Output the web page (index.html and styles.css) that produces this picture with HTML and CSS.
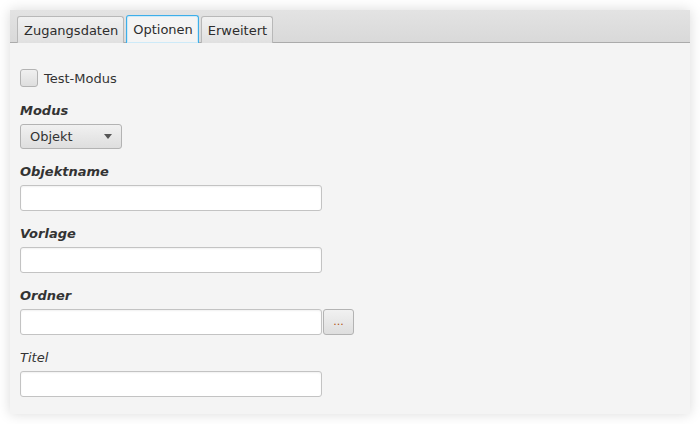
FILE: index.html
```html
<!DOCTYPE html>
<html lang="de">
<head>
    <meta charset="UTF-8">
    <title>Optionen</title>
    <link rel="stylesheet" href="styles.css">
</head>
<body>
    <div class="pane">
        <div class="tab-header">
            <div class="tab">Zugangsdaten</div>
            <div class="tab selected">Optionen</div>
            <div class="tab">Erweitert</div>
        </div>

        <div class="content">
            <label class="check-row">
                <span class="check-box"></span>
                <span>Test-Modus</span>
            </label>

            <div class="field">
                <div class="field-label required">Modus</div>
                <div class="combo">
                    <span>Objekt</span>
                    <span class="arrow"></span>
                </div>
            </div>

            <div class="field">
                <div class="field-label required">Objektname</div>
                <div class="text-input"></div>
            </div>

            <div class="field">
                <div class="field-label required">Vorlage</div>
                <div class="text-input"></div>
            </div>

            <div class="field">
                <div class="field-label required">Ordner</div>
                <div class="input-row">
                    <div class="text-input"></div>
                    <div class="btn">...</div>
                </div>
            </div>

            <div class="field">
                <div class="field-label">Titel</div>
                <div class="text-input"></div>
            </div>
        </div>
    </div>
</body>
</html>
```

FILE: styles.css
```css
:root {
    --bg: #f4f4f4;
    --text: #333333;
    --border: #b5b5b5;
    --focus: #3daee9;
}

* {
    box-sizing: border-box;
    margin: 0;
    padding: 0;
}

body {
    background: #ffffff;
    padding: 10px;
    font-family: 'DejaVu Sans', sans-serif;
    font-size: 13px;
    color: var(--text);
}

.pane {
    width: 680px;
    height: 404px;
    background: var(--bg);
    box-shadow: 0 0 12px rgba(0, 0, 0, 0.15);
}

.tab-header {
    height: 33px;
    padding: 6px 0 0 7px;
    display: flex;
    align-items: flex-end;
    gap: 2px;
    background: linear-gradient(#e3e3e3, #d9d9d9);
    border-bottom: 1px solid #ababab;
}

.tab {
    height: 27px;
    margin-bottom: -1px;
    padding: 0 5px 0 6px;
    display: flex;
    align-items: center;
    border: 1px solid #b8b8b8;
    border-bottom: none;
    border-radius: 3px 3px 0 0;
    background: linear-gradient(#f1f1f1, #e0e0e0);
    color: #2d2d2d;
}

.tab.selected {
    background: var(--bg);
    border-color: var(--focus);
    box-shadow: inset 0 0 0 1px #cdeaf8;
    height: 28px;
}

.content {
    padding: 26px 10px 0 10px;
    display: flex;
    flex-direction: column;
    gap: 15px;
}

.check-row {
    display: flex;
    align-items: center;
    gap: 6px;
    height: 18px;
    margin-bottom: 1px;
}

.check-box {
    width: 18px;
    height: 18px;
    border: 1px solid #b3b3b3;
    border-radius: 3px;
    background: linear-gradient(#f0f0f0, #dedede);
}

.field {
    display: flex;
    flex-direction: column;
    gap: 5px;
}

.field-label {
    font-style: italic;
    line-height: 16px;
}

.field-label.required {
    font-weight: bold;
}

.combo {
    width: 102px;
    height: 25px;
    padding: 0 9px;
    display: flex;
    align-items: center;
    justify-content: space-between;
    border: 1px solid #b3b3b3;
    border-radius: 3px;
    background: linear-gradient(#f1f1f1, #dedede);
}

.arrow {
    width: 0;
    height: 0;
    border-left: 4px solid transparent;
    border-right: 4px solid transparent;
    border-top: 5px solid #555;
}

.text-input {
    width: 302px;
    height: 26px;
    background: #ffffff;
    border: 1px solid #c3c3c3;
    border-radius: 3px;
    box-shadow: inset 0 1px 2px rgba(0, 0, 0, 0.06);
}

.input-row {
    display: flex;
    gap: 1px;
}

.btn {
    width: 31px;
    height: 26px;
    display: flex;
    align-items: center;
    justify-content: center;
    border: 1px solid #b3b3b3;
    border-radius: 3px;
    background: linear-gradient(#f1f1f1, #dedede);
    font-size: 11px;
    color: #b2530a;
    padding-bottom: 2px;
}
```
